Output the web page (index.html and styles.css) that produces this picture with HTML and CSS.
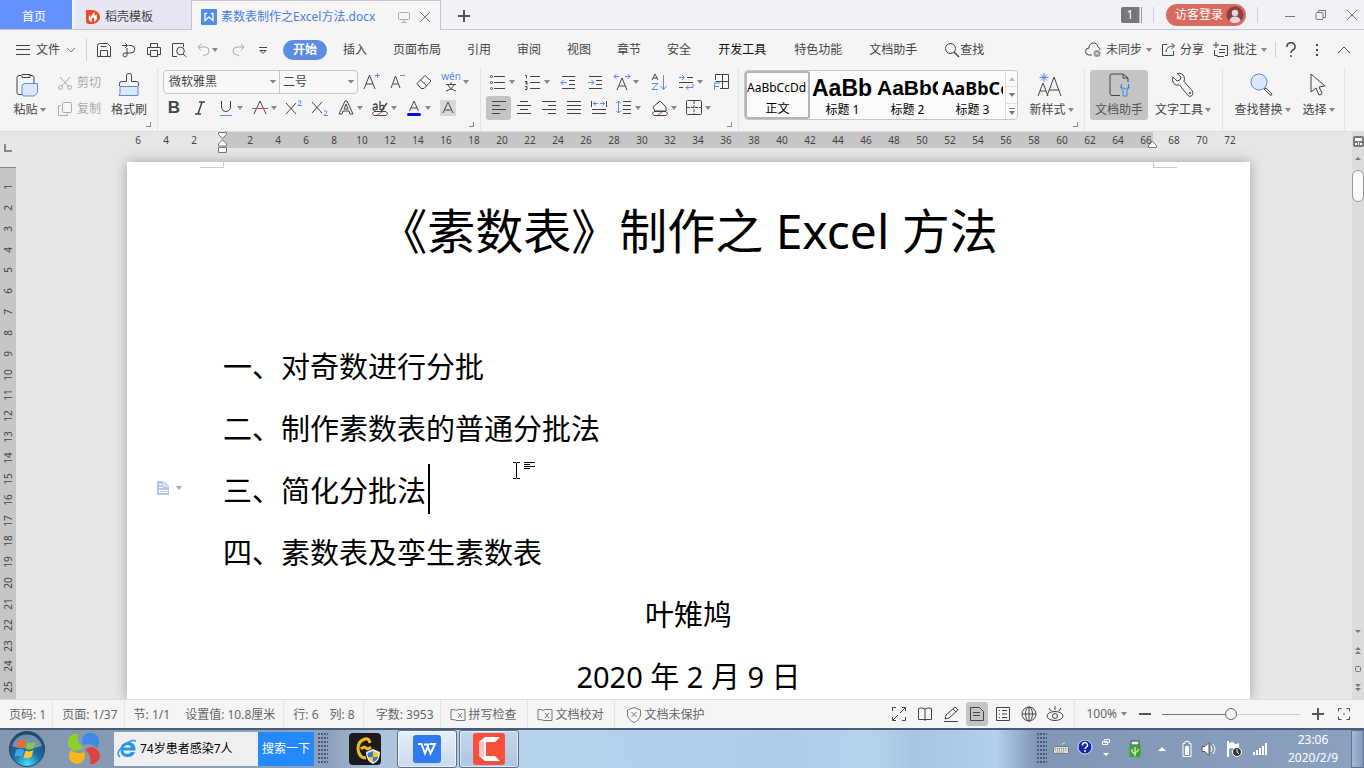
FILE: index.html
```html
<!DOCTYPE html>
<html lang="zh-CN">
<head>
<meta charset="utf-8">
<title>素数表制作之Excel方法.docx</title>
<link rel="stylesheet" href="styles.css">
</head>
<body>
<header class="titlebar">
  <button class="tab tab-home">首页</button>
  <button class="tab tab-docer">
    <svg width="14" height="16" viewBox="0 0 14 16"><path d="M0 1h5a8 7 0 0 1 9 7a8 7 0 0 1-9 7H3a3 3 0 0 1-3-3z" fill="#f04a23"/><path d="M6 13C2 12 2 8 4 6c0 2 1 3 1 3C5 6 7 4 9 3c-1 2 0 3 0 4c1-1 1-2 1-2c2 3 1 7-2 8c1-2 0-4-1-5c-1 2-2 3-1 5z" fill="#fff"/></svg>
    <span>稻壳模板</span>
  </button>
  <div class="tab tab-doc">
    <svg width="16" height="16" viewBox="0 0 16 16"><rect width="16" height="16" rx="1" fill="#4e8ee6"/><path d="M4 4v7.500l4-3.500l4 3.500V4M4 4.500h2M10 4.500h2" fill="none" stroke="#fff" stroke-width="1.300"/></svg>
    <span class="tab-name">素数表制作之Excel方法.docx</span>
    <svg width="12" height="12" viewBox="0 0 12 12" class="ln faint"><rect x=".5" y="1.500" width="11" height="7" rx="1"/><path d="M6 8.500v3M3.500 11.500h5"/></svg>
    <button class="plain" aria-label="关闭标签"><svg width="12" height="12" viewBox="0 0 12 12" class="ln grey"><path d="M1 1l10 10M11 1L1 11"/></svg></button>
  </div>
  <button class="plain new-tab" aria-label="新建"><svg width="12" height="12" viewBox="0 0 12 12" class="ln thick"><path d="M6 0v12M0 6h12"/></svg></button>
  <div class="spacer"></div>
  <div class="window-count"><span>1</span></div>
  <i class="vsep"></i>
  <button class="login">访客登录
    <svg width="18" height="18" viewBox="0 0 18 18"><circle cx="9" cy="9" r="8.500" fill="#8d3f49"/><circle cx="9" cy="7" r="3.200" fill="#e9d6da"/><path d="M3.500 15a5.500 4.500 0 0 1 11 0a8 8 0 0 1-11 0z" fill="#e9d6da"/></svg>
  </button>
  <i class="vsep"></i>
  <div class="window-buttons">
    <button class="plain" aria-label="最小化"><svg width="12" height="12" viewBox="0 0 12 12" class="ln grey"><path d="M1 7.500h10"/></svg></button>
    <button class="plain" aria-label="还原"><svg width="12" height="12" viewBox="0 0 12 12" class="ln grey"><rect x="1" y="3.500" width="7" height="7" rx="1"/><path d="M3.500 3.500V1.500h7v7h-2.500"/></svg></button>
    <button class="plain" aria-label="关闭"><svg width="12" height="12" viewBox="0 0 12 12" class="ln grey"><path d="M1 1l10 10M11 1L1 11"/></svg></button>
  </div>
</header>

<nav class="menubar">
  <button class="file-menu">
    <svg width="14" height="12" viewBox="0 0 14 12" class="ln"><path d="M0 1.500h14M0 5.500h14M0 10.500h14"/></svg>
    <span>文件</span>
    <svg width="10" height="8" viewBox="0 0 10 8" class="ln grey"><path d="M1 2l4 4l4-4"/></svg>
  </button>
  <i class="vsep tall"></i>
  <div class="quick">
    <button class="q" aria-label="保存"><svg width="16" height="16" viewBox="0 0 16 16" class="ln"><path d="M1.500 14.500v-11a2 2 0 0 1 2-2h8l3 3v10zM4.500 14.500v-6h7v6M4.500 4.500h6"/></svg></button>
    <button class="q" aria-label="输出为PDF"><svg width="16" height="16" viewBox="0 0 16 16" class="ln"><path d="M1 3.500h5M4 1l2.500 2.500L4 6M7.500 3.500H10a3.500 3.500 0 0 1 0 7.500H4a2 2 0 1 0 2 2V6"/></svg></button>
    <button class="q" aria-label="打印"><svg width="16" height="16" viewBox="0 0 16 16" class="ln"><path d="M4.500 5V1.500h7V5M4 12.500H1.500v-7h13v7H12M4.500 8.500h7v6h-7z"/></svg></button>
    <button class="q" aria-label="打印预览"><svg width="16" height="16" viewBox="0 0 16 16" class="ln"><path d="M6 14.500H1.500v-13h11V5M12 12l3.500 3"/><circle cx="9.500" cy="9" r="3.800"/></svg></button>
    <button class="q dd" aria-label="撤销"><svg width="16" height="16" viewBox="0 0 16 16" class="ln faint"><path d="M5 2L2 5l3 3.500M2 5h7a4 4 0 0 1 0 8l-2 1"/></svg></button>
    <button class="q" aria-label="恢复"><svg width="16" height="16" viewBox="0 0 16 16" class="ln faint"><path d="M11 2l3 3l-3 3.500M14 5H7a4 4 0 0 0 0 8l2 1"/></svg></button>
    <button class="q" aria-label="自定义快速访问"><svg width="16" height="16" viewBox="0 0 16 16" class="ln"><path d="M4 5.500h8M5 8.500l3 3l3-3z"/></svg></button>
  </div>
  <button class="menu active">开始</button>
  <div class="menus">
    <button class="menu">插入</button><button class="menu">页面布局</button><button class="menu">引用</button><button class="menu">审阅</button><button class="menu">视图</button><button class="menu">章节</button><button class="menu">安全</button><button class="menu wide dark">开发工具</button><button class="menu wide">特色功能</button><button class="menu">文档助手</button>
    <button class="menu find"><svg width="16" height="16" viewBox="0 0 16 16" class="ln"><circle cx="6.500" cy="6.500" r="5"/><path d="M10 10l5 5" stroke-width="1.500"/></svg>查找</button>
  </div>
  <div class="spacer"></div>
  <div class="share-bar">
    <button class="dd"><svg width="17" height="16" viewBox="0 0 17 16" class="ln"><path d="M7 13H4a3.500 3.500 0 0 1 0-7a4.500 4.500 0 0 1 9-1a3 3 0 0 1 2 3"/><circle cx="12" cy="11.500" r="3.500" fill="#999" stroke="none"/><path d="M11 10.500l2 2M13 10.500l-2 2" stroke="#fff"/></svg><span>未同步</span></button>
    <button><svg width="15" height="16" viewBox="0 0 15 16" class="ln"><path d="M6 2.500H1.500v11h11V9M5 10c0-4 3-6 8-6M10.500 1l3 3l-3 3"/></svg><span>分享</span></button>
    <button class="dd"><svg width="16" height="16" viewBox="0 0 16 16" class="ln"><path d="M3 0v6M0 3h6M8 3.500h6.500v10H12M1.500 8v5.500h3M4 14.500h7M6 7.500h6M6 10.500h6"/></svg><span>批注</span></button>
  </div>
  <i class="vsep"></i>
  <div class="help-bar">
    <button class="plain" aria-label="帮助"><svg width="12" height="16" viewBox="0 0 12 16" class="ln strong"><path d="M2 5a4 4 0 1 1 6 3q-2 1-2 3M6 13v2"/></svg></button>
    <button class="plain" aria-label="更多"><svg width="12" height="16" viewBox="0 0 12 16" fill="#444"><rect x="5" y="2" width="2" height="2"/><rect x="5" y="7" width="2" height="2"/><rect x="5" y="12" width="2" height="2"/></svg></button>
    <button class="plain" aria-label="折叠功能区"><svg width="14" height="16" viewBox="0 0 14 16" class="ln"><path d="M1 11l6-6l6 6"/></svg></button>
  </div>
</nav>

<section class="ribbon">
  <div class="group clipboard">
    <button class="big"><svg width="26" height="26" viewBox="0 0 26 26" class="ln"><path d="M8 22.500H4a2 2 0 0 1-2-2V5.500a2 2 0 0 1 2-2h2M15 3.500h2a2 2 0 0 1 2 2V11M7 2.500h8v3H7z"/><path d="M9.500 11.500h13v9l-3 3.500H9a2 2 0 0 1-2-2v-8a2 2 0 0 1 2-2z" fill="#dbe8fb" stroke="#5a8be0"/></svg><span class="dd">粘贴</span></button>
    <div class="stack">
      <button class="small"><svg width="16" height="16" viewBox="0 0 16 16" class="ln faint"><circle cx="3.500" cy="12.500" r="2"/><circle cx="12.500" cy="12.500" r="2"/><path d="M5 11l8-9M11 11L3 2"/></svg>剪切</button>
      <button class="small"><svg width="16" height="16" viewBox="0 0 16 16" class="ln faint"><rect x="5.500" y="1.500" width="9" height="10" rx="1"/><path d="M3.500 4.500h-2v10h9v-2"/></svg>复制</button>
    </div>
    <button class="big"><svg width="26" height="26" viewBox="0 0 26 26" class="ln"><path d="M3.500 14V11.500a2 2 0 0 1 2-2h5v-6q0-2 2.500-2t2.500 2v6h5a2 2 0 0 1 2 2V14"/><path d="M4 14.500h18v9H3l1-2z" fill="#dbe8fb" stroke="#5a8be0"/></svg><span>格式刷</span></button>
    <i class="corner"></i>
  </div>

  <div class="group font">
    <div class="row">
      <div class="combos">
        <select class="font-name" aria-label="字体"><option>微软雅黑</option></select>
        <select class="font-size" aria-label="字号"><option>二号</option></select>
      </div>
      <button class="ib" aria-label="增大字号"><svg width="18" height="18" viewBox="0 0 18 18" class="ln"><path d="M1 16L6.500 2L12 16M3 11h7"/><path d="M14.500 0v5M12 2.500h5" stroke="#5a8be0"/></svg></button>
      <button class="ib" aria-label="减小字号"><svg width="18" height="18" viewBox="0 0 18 18" class="ln"><path d="M2 15L6.500 3L11 15M4 11h5.500"/><path d="M11 2.500h5" stroke="#5a8be0"/></svg></button>
      <button class="ib" aria-label="清除格式"><svg width="18" height="18" viewBox="0 0 18 18" class="ln"><path d="M2 10.500L10 2.500l6 5.500l-7 7.500H6zM5.500 7l6.500 6"/></svg></button>
      <button class="ib dd pinyin" aria-label="拼音指南"><span class="py"><span class="rt">wén</span><svg width="12" height="10" viewBox="0 0 12 10" class="ln"><path d="M6 0v2M1 2.500h10M3 3q2 5 8 6M9 3Q7 8 1 9"/></svg></span></button>
    </div>
    <div class="row second">
      <button class="ib glyph bold">B</button>
      <button class="ib" aria-label="倾斜"><svg width="18" height="18" viewBox="0 0 18 18" class="ln strong"><path d="M8 3h6M4 15h6M11 3L7 15"/></svg></button>
      <button class="ib dd" aria-label="下划线"><svg width="18" height="18" viewBox="0 0 18 18" class="ln"><path d="M4.500 2v6a4.500 4.500 0 0 0 9 0V2"/><path d="M3 16.500h12" stroke="#5a8be0"/></svg></button>
      <button class="ib dd" aria-label="删除线"><svg width="18" height="18" viewBox="0 0 18 18" class="ln"><path d="M3 15L9 2l6 13"/><path d="M1 9.500h16" stroke="#d0504a"/></svg></button>
      <button class="ib" aria-label="上标"><svg width="18" height="18" viewBox="0 0 18 18" class="ln"><path d="M1 4l10 11M11 4L1 15"/><path d="M13 2.500q1.500-1.500 3 0q0 1.500-3 4h4" stroke="#5a8be0"/></svg></button>
      <button class="ib" aria-label="下标"><svg width="18" height="18" viewBox="0 0 18 18" class="ln"><path d="M1 3l10 11M11 3L1 14"/><path d="M13 12.500q1.500-1.500 3 0q0 1.500-3 4h4" stroke="#5a8be0"/></svg></button>
      <button class="ib dd" aria-label="文字效果"><svg width="18" height="18" viewBox="0 0 18 18" class="ln"><path d="M2 15L8 2h2l6 13h-3l-1-3H6l-1 3zM7 10l2-5l2 5z"/></svg></button>
      <button class="ib dd" aria-label="突出显示"><svg width="18" height="18" viewBox="0 0 18 18" class="ln"><path d="M2 6q3-2 4 0v5M6 8q-4 0-4 2q1 2 4 0M9 2v9M9 7q4-2 4 1.500t-4 2M16 4l-6 8" stroke-width="1.300"/><path d="M3 12.500h12q3 2 0 4H3q-3-2 0-4z"/><path d="M6 16l5-3" stroke="#d0504a"/></svg></button>
      <button class="ib dd" aria-label="字体颜色"><svg width="18" height="18" viewBox="0 0 18 18" class="ln"><path d="M4.500 12L9 2l4.500 10M6 9h6"/><path d="M3.500 15.500h11" stroke="#0a0ad6" stroke-width="3" stroke-linecap="round"/></svg></button>
      <button class="ib" aria-label="字符底纹"><svg width="18" height="18" viewBox="0 0 18 18" class="ln"><path d="M1 1h16v16H1z" fill="#d9d9d9" stroke="none"/><path d="M4 14L9 3l5 11M6 11h6"/></svg></button>
    </div>
    <i class="corner"></i>
  </div>

  <div class="group para">
    <div class="row spaced">
      <button class="ib dd" aria-label="项目符号"><svg width="18" height="18" viewBox="0 0 18 18" class="ln"><path d="M5 3.500h11M5 9.500h11M5 15.500h11"/><circle cx="2.500" cy="3.500" r="1"/><circle cx="2.500" cy="9.500" r="1"/><circle cx="2.500" cy="15.500" r="1"/></svg></button>
      <button class="ib dd" aria-label="编号"><svg width="18" height="18" viewBox="0 0 18 18" class="ln"><path d="M6 3.500h10M6 9.500h10M6 15.500h10M1 2.500h1.500v3M1 8.500h2v1h-1v1.500h2M1 13.500h2v3h-2"/></svg></button>
      <button class="ib" aria-label="减少缩进"><svg width="18" height="18" viewBox="0 0 18 18" class="ln"><path d="M3 3.500h13M10 7.500h6M10 11.500h6M3 15.500h13"/><path d="M2 9.500h6M4.500 7L2 9.500L4.500 12" stroke="#5a8be0"/></svg></button>
      <button class="ib" aria-label="增加缩进"><svg width="18" height="18" viewBox="0 0 18 18" class="ln"><path d="M3 3.500h13M10 7.500h6M10 11.500h6M3 15.500h13"/><path d="M2 9.500h6M5.500 7L8 9.500L5.500 12" stroke="#5a8be0"/></svg></button>
      <button class="ib dd" aria-label="字符缩放"><svg width="18" height="18" viewBox="0 0 18 18" class="ln"><path d="M4 17L9 5l5 12M6 13h6"/><path d="M1 3.500h5M3.500 1L1 3.500L3.500 6M12 3.500h5M14.500 1L17 3.500L14.500 6" stroke="#5a8be0"/></svg></button>
      <button class="ib apart" aria-label="排序"><svg width="18" height="18" viewBox="0 0 18 18" class="ln"><path d="M2 7L5 1l3 6M3 5h4"/><path d="M2 10.500h6L2 16.500h6M13.500 2v14.500M10.500 13l3 3.500l3-3.500" stroke="#5a8be0"/></svg></button>
      <button class="ib dd" aria-label="制表位"><svg width="18" height="18" viewBox="0 0 18 18" class="ln"><path d="M10 4.500h6M2 9.500h14M2 14.500h4"/><path d="M2 4.500h5M5 2l2.500 2.500L5 7M16 11v3.500H9M11.500 12L9 14.500L11.500 17" stroke="#5a8be0"/></svg></button>
      <button class="ib" aria-label="文字排列"><svg width="18" height="18" viewBox="0 0 18 18" class="ln"><path d="M3.500 7V1.500h13v14H8M10.500 1.500v14M3.500 8.500h13"/><path d="M2.500 17v-7H8M2.500 13.500H7" stroke="#5a8be0"/></svg></button>
    </div>
    <div class="row second tight">
      <button class="ib on" aria-label="左对齐"><svg width="18" height="18" viewBox="0 0 18 18" class="ln"><path d="M2 2.500h14M2 6.500h8M2 10.500h14M2 14.500h8"/></svg></button>
      <button class="ib" aria-label="居中"><svg width="18" height="18" viewBox="0 0 18 18" class="ln"><path d="M5 2.500h8M2 6.500h14M5 10.500h8M2 14.500h14"/></svg></button>
      <button class="ib" aria-label="右对齐"><svg width="18" height="18" viewBox="0 0 18 18" class="ln"><path d="M2 2.500h14M8 6.500h8M2 10.500h14M8 14.500h8"/></svg></button>
      <button class="ib" aria-label="两端对齐"><svg width="18" height="18" viewBox="0 0 18 18" class="ln"><path d="M2 2.500h14M2 6.500h14M2 10.500h14M2 14.500h14"/></svg></button>
      <button class="ib" aria-label="分散对齐"><svg width="18" height="18" viewBox="0 0 18 18" class="ln"><path d="M1.500 2v6M16.500 2v6M2 10.500h14M2 14.500h14"/><path d="M3 4.500h5M5.500 2.500l-2 2l2 2M10 4.500h5M12.500 2.500l2 2l-2 2" stroke="#5a8be0"/></svg></button>
      <button class="ib dd" aria-label="行距"><svg width="18" height="18" viewBox="0 0 18 18" class="ln"><path d="M8 2.500h8M8 6.500h8M8 10.500h8M8 14.500h8"/><path d="M3.500 2v12M1 4.500L3.500 2L6 4.500M1 11.500L3.500 14L6 11.500" stroke="#5a8be0"/></svg></button>
      <button class="ib dd apart" aria-label="底纹颜色"><svg width="18" height="18" viewBox="0 0 18 18" class="ln"><path d="M2 8l7-6l6 6v4H4zM6 4.500L9 2M3 12.500h12q3 2 0 4H3q-3-2 0-4z"/><path d="M7 16l4-3" stroke="#d0504a"/></svg></button>
      <button class="ib dd" aria-label="边框"><svg width="18" height="18" viewBox="0 0 18 18" class="ln"><rect x="1.500" y="1.500" width="15" height="14" rx="1"/><path d="M9 2v13M2 8.500h14" stroke-dasharray="3 1"/></svg></button>
    </div>
    <i class="corner"></i>
  </div>

  <div class="group styles">
    <div class="gallery">
      <button class="style sel"><span class="pv pv0">AaBbCcDd</span><span>正文</span></button>
      <button class="style"><span class="pv pv1">AaBb</span><span>标题 1</span></button>
      <button class="style"><span class="pv pv2">AaBbC</span><span>标题 2</span></button>
      <button class="style"><span class="pv pv3">AaBbCc</span><span>标题 3</span></button>
      <div class="gallery-nav">
        <button aria-label="上一行"><svg width="6" height="4" viewBox="0 0 6 4"><path d="M0 4l3-4l3 4z" fill="#bbb"/></svg></button>
        <button aria-label="下一行"><svg width="6" height="4" viewBox="0 0 6 4"><path d="M0 0l3 4l3-4z" fill="#777"/></svg></button>
        <button aria-label="展开样式"><svg width="6" height="7" viewBox="0 0 6 7"><path d="M0 0h6v1H0zM0 3l3 4l3-4z" fill="#777"/></svg></button>
      </div>
    </div>
    <button class="big"><svg width="26" height="26" viewBox="0 0 26 26" class="ln"><path d="M1 24L6 11l5 13M3 19h6M10 24L17 5l7 19M12 18h10"/><path d="M7 1v9M2.500 5.500h9M4 2.500l6 6M10 2.500l-6 6" stroke="#5a8be0"/></svg><span class="dd">新样式</span></button>
    <i class="corner"></i>
  </div>

  <div class="group tools">
    <button class="big on"><svg width="26" height="26" viewBox="0 0 26 26" class="ln"><path d="M14 23.500H6a2 2 0 0 1-2-2V4a2 2 0 0 1 2-2h11l5 4v4M17 2v4h5"/><path d="M15.500 12q-2 4 1.500 6v6h4v-6q3.500-2 1.500-6v4h-2l-1 1l-2-1h-2z" stroke="#4a80e0"/></svg><span>文档助手</span></button>
    <button class="big"><svg width="26" height="26" viewBox="0 0 26 26" class="ln"><path d="M4 5l4 4l3-1l1-3L8 1.500q5-1 7 3q1 3 0 5l8 9q2 3 0 5q-2 2-4 0L10.500 13q-4 1-6-2T4 5z"/><circle cx="21" cy="21" r=".7"/></svg><span class="dd">文字工具</span></button>
  </div>

  <div class="group edit">
    <button class="big"><svg width="26" height="26" viewBox="0 0 26 26" class="ln"><circle cx="11" cy="10" r="8" fill="#dbe8fb" stroke="#5a8be0"/><path d="M16 17l6 6q2 1 2-1l-6-6z"/></svg><span class="dd">查找替换</span></button>
    <button class="big"><svg width="26" height="26" viewBox="0 0 26 26" class="ln"><path d="M7 2v18l5-4l3 7q3 0 3-2l-3-6l6-1z"/></svg><span class="dd">选择</span></button>
  </div>
</section>

<main class="workspace">
  <div class="vruler">
    <div class="tabstop"></div>
    <div class="vscale"><span>1</span><span>2</span><span>3</span><span>4</span><span>5</span><span>6</span><span>7</span><span>8</span><span>9</span><span>10</span><span>11</span><span>12</span><span>13</span><span>14</span><span>15</span><span>16</span><span>17</span><span>18</span><span>19</span><span>20</span><span>21</span><span>22</span><span>23</span><span>24</span><span>25</span></div>
  </div>
  <div class="canvas">
    <div class="sheet">
      <div class="hruler">
        <div class="scale before"><span>6</span><span>4</span><span>2</span></div>
        <div class="scale inside">
          <svg class="indent-left" width="10" height="22" viewBox="0 0 10 22"><path d="M.5.500h8v2L4.500 7l-4-4.500zM4.500 8l4 4v2h-8v-2zM.5 15.500h8v5h-8z" fill="#fff" stroke="#777"/></svg>
          <span>2</span><span>4</span><span>6</span><span>8</span><span>10</span><span>12</span><span>14</span><span>16</span><span>18</span><span>20</span><span>22</span><span>24</span><span>26</span><span>28</span><span>30</span><span>32</span><span>34</span><span>36</span><span>38</span><span>40</span><span>42</span><span>44</span><span>46</span><span>48</span><span>50</span><span>52</span><span>54</span><span>56</span><span>58</span><span>60</span><span>62</span><span>64</span><span>66</span>
          <svg class="indent-right" width="10" height="8" viewBox="0 0 10 8"><path d="M4.500.500l4 4v2h-8v-2z" fill="#fff" stroke="#777"/></svg>
        </div>
        <div class="scale after"><span>68</span><span>70</span><span>72</span></div>
      </div>
      <article class="page">
        <i class="crop crop-left"></i><i class="crop crop-right"></i>
        <h1>《素数表》制作之 Excel 方法</h1>
        <p>一、对奇数进行分批</p>
        <p>二、制作素数表的普通分批法</p>
        <p class="current">
          <button class="para-tool dd" aria-label="段落布局"><svg width="14" height="16" viewBox="0 0 14 16"><path d="M1 1h7l5 5v9H1z" fill="#b4c6ea"/><path d="M8 1v5h5M3 4.500h3M3 7.500h4M3 10.500h2M3.500 10.500h8v2h-8z" fill="none" stroke="#fff"/></svg></button>三、简化分批法<i class="text-caret"></i>
          <svg class="pointer" width="24" height="20" viewBox="0 0 24 20"><path d="M1 1.500h3l.5.500l.5-.5h3M1 17.500h3l.5-.5l.5.500h3M4.500 2v15" fill="none" stroke="#000"/><path d="M12 1.500h11M12 3.500h6M12 5.500h11M12 7.500h6" stroke="#000"/></svg>
        </p>
        <p>四、素数表及孪生素数表</p>
        <p class="center">叶雉鸠</p>
        <p class="center">2020 年 2 月 9 日</p>
      </article>
    </div>
  </div>
  <div class="scrollbar">
    <svg width="11" height="11" viewBox="0 0 11 11"><rect width="11" height="11" rx="2" fill="#777"/><path d="M2 2h7v3H2zM2 7h2v2H2zM7 7h2v2H7zM5 6h1v3H5z" fill="#fff"/></svg>
    <svg width="8" height="5" viewBox="0 0 8 5"><path d="M1 4l3-3l3 3z" fill="#777"/></svg>
    <div class="thumb"></div>
    <div class="spacer"></div>
    <div class="browse">
      <svg width="8" height="6" viewBox="0 0 8 6"><path d="M1 1h6l-3 3z" fill="#777"/></svg>
      <svg width="8" height="8" viewBox="0 0 8 8"><path d="M1 4l3-3l3 3zM1 8l3-3l3 3z" fill="#777"/></svg>
      <svg width="8" height="8" viewBox="0 0 8 8"><rect x="1.500" y="1.500" width="5" height="5" rx="1" fill="none" stroke="#777"/></svg>
      <svg width="8" height="8" viewBox="0 0 8 8"><path d="M1 0h6L4 3zM1 4h6L4 7z" fill="#777"/></svg>
    </div>
  </div>
</main>

<footer class="statusbar">
  <span class="st">页码: 1</span>
  <span class="st">页面: 1/37</span>
  <span class="st pair"><span>节: 1/1</span><span>设置值: 10.8厘米</span></span>
  <span class="st rowcol"><span>行: 6</span><span>列: 8</span></span>
  <span class="st">字数: 3953</span>
  <button class="st"><svg width="16" height="14" viewBox="0 0 16 14" class="ln grey"><path d="M7 2.500Q5 1.500 1 1.500v10q4 0 6 1h8v-11H9q-2 0-2 1M8 5l4 5M12 5l-4 5"/></svg>拼写检查</button>
  <button class="st"><svg width="16" height="14" viewBox="0 0 16 14" class="ln grey"><path d="M7 2.500Q5 1.500 1 1.500v10q4 0 6 1h8v-11H9q-2 0-2 1M8 5l4 5M12 5l-4 5"/></svg>文档校对</button>
  <button class="st last"><svg width="16" height="16" viewBox="0 0 16 16" class="ln grey"><path d="M8 .500l6.500 2.500v5q-1 5-6.500 7.500Q2.500 13 1.500 8V3zM5.500 5l5 5M10.500 5l-5 5"/></svg>文档未保护</button>
  <div class="spacer"></div>
  <div class="views">
    <button aria-label="全屏显示"><svg width="16" height="16" viewBox="0 0 16 16" class="ln"><path d="M1.500 5V1.500H5M11 1.500h3.500V5M1.500 11v3.500H5M14.500 11v3.500H11M9 7l5-5M7 9l-5 5"/></svg></button>
    <button aria-label="阅读版式"><svg width="16" height="16" viewBox="0 0 16 16" class="ln"><path d="M8 3v12M8 3Q5 1 1.500 2.500v11H8M8 3q3-2 6.500-.5v11H8"/></svg></button>
    <button aria-label="写作模式"><svg width="16" height="16" viewBox="0 0 16 16" class="ln"><path d="M2 13l1-4l9-8l3 3l-9 8zM10 3l3 3M1 15.500h14"/></svg></button>
    <button class="on" aria-label="页面视图"><svg width="16" height="16" viewBox="0 0 16 16" class="ln"><path d="M1.500 1.500h9l4 4v9h-13zM4 6.500h7M4 9.500h7"/></svg></button>
    <button aria-label="大纲"><svg width="16" height="16" viewBox="0 0 16 16" class="ln"><path d="M1.500 1.500h13v13h-13zM4 4.500h1M7 4.500h5M4 8h1M7 8h5M4 11.500h1M7 11.500h5"/></svg></button>
    <button aria-label="Web版式"><svg width="16" height="16" viewBox="0 0 16 16" class="ln"><circle cx="8" cy="8" r="7"/><ellipse cx="8" cy="8" rx="3.500" ry="7"/><path d="M8 1v14M1 8h14"/></svg></button>
    <button aria-label="护眼模式"><svg width="18" height="16" viewBox="0 0 18 16" class="ln"><ellipse cx="9" cy="10" rx="8" ry="4.500"/><circle cx="9" cy="10" r="2.500"/><path d="M9 0v4M3 2l2 3M15 2l-2 3"/></svg></button>
  </div>
  <div class="zoom">
    <button class="dd pct">100%</button>
    <button class="plain" aria-label="缩小"><svg width="12" height="12" viewBox="0 0 12 12" class="ln thick"><path d="M0 6h12"/></svg></button>
    <input type="range" min="0" max="100" value="50" aria-label="显示比例">
    <button class="plain" aria-label="放大"><svg width="12" height="12" viewBox="0 0 12 12" class="ln thick"><path d="M6 0v12M0 6h12"/></svg></button>
    <button class="plain" aria-label="适应窗口"><svg width="12" height="12" viewBox="0 0 12 12" class="ln"><path d="M.5 3.500v-3h3M8.500.500h3v3M.5 8.500v3h3M11.500 8.500v3h-3M5 6h2"/></svg></button>
  </div>
</footer>

<div class="taskbar">
  <button class="plain orb" aria-label="开始菜单"><svg width="38" height="38" viewBox="0 0 38 38"><defs><radialGradient id="orb" cx=".5" cy=".95" r=".9"><stop offset="0" stop-color="#4ee0ff"/><stop offset=".45" stop-color="#1c6ea6"/><stop offset="1" stop-color="#24486e"/></radialGradient></defs><circle cx="19" cy="19" r="17.500" fill="url(#orb)" stroke="#27405e"/><path d="M4 16a15.500 15.500 0 0 1 30 0q-15 5-30 0z" fill="#a5bdd2" opacity=".6"/><path d="M10 11q4-2 8 0l-1.500 7q-4-2-8 0z" fill="#ee6a2e"/><path d="M19.500 12q4 2 8-.5l-2 7q-4 2-7.500.5z" fill="#8cc63f"/><path d="M8 20q4-2 8 0l-2 7q-3-2-7.500 0z" fill="#43a4e6"/><path d="M17.500 20.500q4 2 8-.5l-2 7q-4 2-8 .5z" fill="#fdc82f"/></svg></button>
  <button class="plain clover" aria-label="浏览器"><svg width="32" height="32" viewBox="0 0 32 32"><path d="M10 1a8.500 8.500 0 1 0 5 13q-7-4-5-13z" fill="#8ed02b"/><path d="M31 9A8.500 8.500 0 1 0 15 12q8-3 14 3q2-2 2-6z" fill="#3f8ae6"/><path d="M22 31a8.500 8.500 0 1 0-5-14q7 5 5 14z" fill="#e0443e"/><path d="M1 23a8 8 0 1 0 15-4Q8 22 3 17q-2 2-2 6z" fill="#f5b81c"/></svg></button>
  <form class="search">
    <svg width="20" height="20" viewBox="0 0 20 20"><path d="M6 11.500h12.500q.5-8.500-8-8.500q-7 1-7 8t7 7q6 0 7.500-5h-4q-1.500 2-4 2t-4-3.500zM6.500 8.500q1-2.500 4-2.500t3.500 2.500z" fill="#2597e8" fill-rule="evenodd"/><path d="M3 18Q-2 14 6 7Q14 0 19 2" fill="none" stroke="#2597e8" stroke-width="1.500"/></svg>
    <input type="text" value="74岁患者感染7人" aria-label="搜索">
    <button type="button">搜索一下</button>
  </form>
  <i class="grip"></i>
  <button class="plain recorder" aria-label="录屏工具"><svg width="32" height="32" viewBox="0 0 32 32"><rect width="32" height="32" rx="4" fill="#1c1a1c"/><path d="M21 10q-1-5-5-4q-7 2-7 10q1 9 8 9M12 16q3-3 5-1t5-1" fill="none" stroke="#f6b81a" stroke-width="3"/><path d="M24 16l7 3q0 9-7 12q-7-3-7-12z" fill="#e9edf0"/><path d="M24 18v6h-5q-1-2 0-4zM24 24h5q-1 4-5 5z" fill="#2d7ec4"/><path d="M24 18l5 2v4h-5zM24 24v5q-4-2-5-5z" fill="#fbc62d"/></svg></button>
  <button class="task active" aria-label="WPS"><svg width="28" height="28" viewBox="0 0 28 28"><rect width="28" height="28" rx="3" fill="#3079ee"/><path d="M5 9h3.500l3.500 9.500L15.500 9.500H11M14.500 11l3 7.500L22 9h-5" fill="none" stroke="#fff" stroke-width="2"/></svg></button>
  <button class="task" aria-label="Camtasia"><svg width="32" height="32" viewBox="0 0 32 32"><rect width="32" height="32" rx="3" fill="#f9503c"/><path d="M27 4H12L6 9v14l6 5h15l-5-5h-9V9h9z" fill="#fff"/><path d="M6 9l5-1v17l-5-2z" fill="#f9c5bf"/></svg></button>
  <div class="spacer"></div>
  <i class="grip"></i>
  <div class="tray">
    <svg width="16" height="16" viewBox="0 0 16 16"><path d="M9 4q0-2 3-2" fill="none" stroke="#ddd"/><rect x=".5" y="5.500" width="15" height="7" rx="1" fill="#dcdcd8" stroke="#777"/><path d="M2 7.500h12M2 9h12M4 11h8" stroke="#888" stroke-dasharray="1 1"/></svg>
    <svg width="16" height="18" viewBox="0 0 16 18"><circle cx="8" cy="7" r="7" fill="#1225a8" stroke="#dbe4ef"/><path d="M5.500 5.500a2.500 2.500 0 1 1 4 1.500q-1.500 1-1.500 2M8 10v2" fill="none" stroke="#fff" stroke-width="1.500"/></svg>
    <svg width="10" height="22" viewBox="0 0 10 22"><path d="M3.500 1.500h5v3h-5zM1.500 3.500h5v3h-5z" fill="none" stroke="#fff"/><path d="M2 15h6l-3 3z" fill="#fff"/></svg>
    <svg class="usb" width="12" height="18" viewBox="0 0 12 18"><path d="M2 1h8v4H2z" fill="#eee" stroke="#444"/><rect x=".5" y="5" width="11" height="12" rx="1" fill="#3ca52c"/><path d="M6 7v9M3 9v3l3 2M9 9v2l-3 2" fill="none" stroke="#fff"/></svg>
    <svg width="10" height="16" viewBox="0 0 10 16"><path d="M1 10l4-4l4 4z" fill="#fff"/></svg>
    <svg class="battery" width="12" height="18" viewBox="0 0 12 18"><path d="M4 1.500h4v2h2v13H2v-13h2z" fill="#8196b2" stroke="#fff"/><path d="M4 6h4v9H4z" fill="#fff"/></svg>
    <svg width="16" height="16" viewBox="0 0 16 16"><path d="M1 5.500h3l4-4v13l-4-4H1z" fill="#fff" stroke="#555"/><path d="M10 5q2 3 0 6M12 3q4 5 0 10" fill="none" stroke="#fff"/></svg>
    <svg width="18" height="18" viewBox="0 0 18 18"><path d="M3 1v16" stroke="#fff" stroke-width="2"/><path d="M4 3q4-2 5 0t5 0v7q-3 1-5-1t-5 0z" fill="#fff"/><circle cx="12" cy="12" r="4.500" fill="#333" stroke="#fff"/><path d="M12 9v3l2 2" fill="none" stroke="#fff"/></svg>
    <svg width="18" height="16" viewBox="0 0 18 16"><path d="M2 11h2v3H2zM5 9h2v5H5zM8 7h2v7H8zM11 5h2v9h-2zM14 2h2v12h-2z" fill="#fff"/></svg>
  </div>
  <div class="clock"><span>23:06</span><span>2020/2/9</span></div>
  <button class="show-desktop" aria-label="显示桌面"></button>
</div>
</body>
</html>
```

FILE: styles.css
```css
* { box-sizing: border-box; }

body {
  margin: 0;
  height: 100vh;
  display: flex;
  flex-direction: column;
  overflow: hidden;
  background: #f5f5f5;
  color: #444;
  font: 12px/16px "Noto Sans", "Noto Sans CJK SC", sans-serif;
}

button, select, input {
  font: inherit;
  color: inherit;
  margin: 0;
  padding: 0;
  border: 0;
  background: none;
  white-space: nowrap;
}

svg { display: block; flex: none; }
i { display: block; flex: none; }
.spacer { flex: 1; }

.ln { fill: none; stroke: #444; }
.ln.grey { stroke: #777; }
.ln.faint { stroke: #aaa; }
.ln.thick { stroke: #555; stroke-width: 2; }
.ln.strong { stroke-width: 1.5; }

.plain { display: flex; align-items: center; justify-content: center; }

/* drop-down marker */
.dd::after {
  content: "";
  flex: none;
  border: 3px solid transparent;
  border-top: 4px solid #888;
  border-bottom: 0;
}

.vsep { width: 1px; height: 16px; background: #cfd0d6; }

/* title bar */
.titlebar {
  flex: none;
  display: flex;
  align-items: center;
  height: 30px;
  background: #f1f2f6;
  border-bottom: 1px solid #c3c4d2;
}
.tab { display: flex; align-items: center; height: 29px; padding-top: 4px; }
.tab-home { width: 72px; padding-right: 4px; justify-content: center; background: #6490fd; color: #fff; }
.tab-docer { width: 116px; margin-left: 3px; padding-left: 11px; gap: 5px; background: #e6e7f2; }
.tab-doc {
  width: 250px;
  height: 30px;
  margin-bottom: -1px;
  padding: 2px 9px 0;
  gap: 4px;
  border: 1px solid #c3c4d2;
  border-bottom: 0;
  background: #f5f5f5;
  color: #4a7de0;
}
.tab-name { flex: 1; }
.tab-doc button { width: 12px; margin-left: 5px; }
.new-tab { width: 45px; height: 29px; padding-top: 2px; }
.window-count {
  display: flex;
  width: 21px;
  height: 16px;
  margin-right: 11px;
  border-right: 1px solid #999;
  padding-right: 1px;
}
.window-count span {
  flex: 1;
  border-right: 1px solid #bbb;
  border-radius: 2px 0 0 2px;
  background: #777;
  color: #fff;
  text-align: center;
}
.login {
  display: flex;
  align-items: center;
  gap: 3px;
  height: 22px;
  margin: 0 11px 0 12px;
  padding: 0 2px 0 9px;
  border-radius: 11px;
  background: #d96a60;
  color: #fff;
}
.window-buttons { display: flex; gap: 19px; padding: 0 6px 0 26px; }

/* menu bar */
.menubar { flex: none; display: flex; align-items: center; height: 38px; padding-top: 1px; }
.file-menu { display: flex; align-items: center; gap: 6px; padding: 0 10px 0 16px; }
.vsep.tall { height: 22px; }
.quick { display: flex; padding-left: 4px; }
.q { display: flex; align-items: center; justify-content: center; width: 25px; height: 24px; }
.q.dd { width: 34px; justify-content: flex-start; padding-left: 5px; }
.menu.active {
  width: 44px;
  height: 20px;
  margin-left: 8px;
  border-radius: 10px;
  background: #5b8ee0;
  color: #fff;
  font-weight: bold;
}
.menus { display: flex; margin-left: 3px; }
.menu { height: 24px; padding: 0 13px; }
.menu.active { padding: 0; }
.menu.wide { padding: 0 14px; }
.menu.dark { color: #111; }
.menu.find { display: flex; align-items: center; padding-left: 14px; }
.share-bar { display: flex; gap: 9px; }
.share-bar button { display: flex; align-items: center; gap: 4px; }
.menubar > .vsep:not(.tall) { margin-left: 8px; }
.help-bar { display: flex; gap: 14px; padding: 0 13px 0 9px; }

/* ribbon */
.ribbon {
  flex: none;
  display: flex;
  height: 64px;
  border-bottom: 1px solid #dcdcdc;
}
.group {
  position: relative;
  flex: none;
  border-right: 1px solid #e4e4e4;
}
.corner {
  position: absolute;
  right: 6px;
  bottom: 4px;
  width: 5px;
  height: 5px;
  border: solid #888;
  border-width: 0 1px 1px 0;
}
.row { display: flex; align-items: center; height: 28px; }
.row.second { height: 24px; }
.row.spaced { gap: 1px; }
.row.tight .ib { width: 25px; }
.row .ib.apart { margin-left: 2px; }
.ib {
  display: flex;
  align-items: center;
  justify-content: center;
  width: 26px;
  height: 24px;
  border-radius: 3px;
}
.ib.dd, .row.tight .ib.dd { width: 34px; justify-content: flex-start; padding-left: 4px; gap: 2px; }
.on { background: #c4c4c4; border-radius: 3px; }
.glyph.bold { font: bold 17px/24px "Liberation Sans", sans-serif; }
.big {
  display: flex;
  flex-direction: column;
  align-items: center;
  gap: 4px;
  height: 50px;
  padding: 2px 0;
}
.big span { display: flex; align-items: center; gap: 2px; }
.big span.dd { margin-right: -3px; }
.big.on span { color: #555; }
.clipboard, .styles, .tools, .edit { display: flex; padding-top: 2px; }
.clipboard { width: 158px; padding-left: 11px; }
.clipboard .big:first-child { width: 34px; }
.clipboard .big:last-of-type { width: 50px; }
.stack { padding-left: 12px; width: 59px; }
.small { display: flex; align-items: center; gap: 4px; height: 26px; color: #aaa; }
.font { width: 323px; padding-left: 3px; }
.font .row:first-child { padding-left: 2px; }
.combos {
  display: flex;
  width: 195px;
  height: 24px;
  margin-right: 1px;
  border: 1px solid #c6c6c6;
  border-radius: 4px;
  background: #f8f8f8;
}
.combos select {
  appearance: none;
  padding-left: 5px;
  background: no-repeat right 3px center / 6px 4px conic-gradient(from -37deg at 50% 100%, #888 74deg, transparent 0);
}
.font-name { width: 115px; }
.combos .font-size { flex: 1; padding-left: 3px; border-left: 1px solid #c6c6c6; }
.py { display: flex; flex-direction: column; align-items: center; gap: 1px; width: 20px; }
.py .rt { font-size: 10px; line-height: 9px; color: #5a8be0; }
.para { width: 258px; padding-left: 4px; }
.para .second { padding-left: 1px; }
.styles { width: 346px; padding-left: 5px; }
.gallery {
  display: flex;
  width: 274px;
  height: 50px;
  border: 1px solid #c6c6c6;
  border-radius: 4px;
  background: #fbfbfb;
}
.style {
  display: flex;
  flex-direction: column;
  align-items: center;
  width: 65px;
  overflow: hidden;
  color: #000;
}
.style.sel { border: 2px solid #b4b4b4; border-radius: 3px; }
.style.sel .pv { height: 29px; }
.style.sel .pv0 { line-height: 30px; }
.pv { width: 61px; height: 31px; overflow: hidden; text-align: left; font-weight: bold; line-height: 34px; }
.pv0 { font-weight: normal; }
.pv1 { font-family: "Liberation Sans", sans-serif; font-size: 23px; }
.pv2 { font-family: "Liberation Sans", sans-serif; font-size: 21px; }
.pv3 { font-size: 18px; }
.gallery-nav { flex: 1; display: flex; flex-direction: column; border-left: 1px solid #ddd; }
.gallery-nav button { flex: 1; display: flex; align-items: center; justify-content: center; }
.gallery-nav button + button { border-top: 1px solid #ddd; }
.styles .big { width: 56px; margin-left: 4px; }
.tools { width: 138px; padding-left: 5px; }
.tools .big { width: 58px; }
.tools .big + .big { width: 67px; }
.edit { width: 122px; padding-left: 5px; }
.edit .big { width: 66px; }
.edit .big + .big { width: 46px; }

/* work area */
.workspace { flex: 1; min-height: 0; display: flex; background: #e7e7e7; }
.vruler { flex: none; width: 16px; display: flex; flex-direction: column; }
.tabstop { position: relative; height: 36px; border-bottom: 1px solid #888; flex: none; }
.tabstop::before {
  content: "";
  position: absolute;
  left: 4px;
  top: 12px;
  width: 6px;
  height: 6px;
  border: solid #888;
  border-width: 0 0 2px 2px;
}
.vscale { flex: 1; display: flex; flex-direction: column; padding: 9px 0 1px; background: #c6c6c6; }
.vscale span {
  flex: 1;
  width: 16px;
  writing-mode: vertical-rl;
  transform: rotate(180deg);
  text-align: center;
  font-size: 10px;
  line-height: 16px;
}
.canvas { flex: 1; min-width: 0; display: flex; justify-content: center; padding-left: 9px; }
.sheet { flex: none; width: 1123px; display: flex; flex-direction: column; }
.hruler { flex: none; display: flex; height: 30px; margin-left: -3px; font-size: 10px; }
.scale { flex: none; display: flex; height: 16px; }
.scale span { flex: none; width: 28px; text-align: center; }
.scale.inside { position: relative; width: 931px; margin-left: 14px; padding-left: 14px; background: #c6c6c6; }
.scale.after { margin-left: 7px; }
.indent-left { position: absolute; left: -4px; top: 0; }
.indent-right { position: absolute; right: -5px; top: 9px; }
.page {
  position: relative;
  flex: 1;
  min-height: 0;
  padding: 36px 96px 0;
  background: #fff;
  box-shadow: 0 0 12px rgba(0, 0, 0, .3);
  clip-path: inset(-14px -14px 0);
  color: #000;
  font-size: 29px;
  line-height: 62px;
  white-space: nowrap;
}
.page h1 { margin: 0 0 72px; font-size: 48px; line-height: 66px; font-weight: normal; text-align: center; }
.page p { margin: 0; height: 62px; }
.page .center { text-align: center; }
.crop { position: absolute; top: 0; width: 24px; height: 6px; border-bottom: 1px solid #ccc; }
.crop-left { left: 73px; border-right: 1px solid #ccc; }
.crop-right { right: 73px; border-left: 1px solid #ccc; }
.page .current { position: relative; display: flex; }
.text-caret { width: 2px; height: 50px; margin: 4px 0 0 2px; background: #000; }
.para-tool { position: absolute; left: -67px; top: 20px; display: flex; align-items: center; gap: 6px; }
.para-tool::after { border-top-color: #aaa; }
.pointer { position: absolute; left: 289px; top: 1px; }

.scrollbar {
  flex: none;
  width: 12px;
  display: flex;
  flex-direction: column;
  align-items: center;
  padding-top: 4px;
  gap: 9px;
  background: #dcdcdc;
}
.thumb { width: 12px; height: 32px; border: 1px solid #999; border-radius: 6px; background: #fafafa; }
.browse { display: flex; flex-direction: column; gap: 11px; padding-bottom: 7px; }

/* status bar */
.statusbar {
  flex: none;
  display: flex;
  align-items: center;
  height: 29px;
  border-top: 1px solid #ddd;
  color: #666;
}
.st {
  display: flex;
  align-items: center;
  gap: 3px;
  height: 28px;
  padding: 1px 6px 0 9px;
  border-right: 1px solid #e4e4e4;
}
.st.pair { gap: 15px; }
.st.rowcol { gap: 11px; padding-right: 12px; }
.st.pair, .st + .st.rowcol { padding-right: 8px; }
.st.rowcol + .st { padding-left: 12px; }
button.st { padding-right: 10px; }
button.st.last { border: 0; padding-left: 11px; }
.views { display: flex; height: 28px; align-items: center; padding-right: 8px; border-right: 1px solid #e4e4e4; }
.views button { display: flex; align-items: center; justify-content: center; width: 22px; height: 24px; }
.views button + button { margin-left: 4px; }
.zoom { display: flex; align-items: center; padding: 0 14px 0 11px; }
.pct { display: flex; align-items: center; gap: 4px; margin-right: 12px; }
.zoom input {
  appearance: none;
  width: 138px;
  height: 14px;
  margin: 0 12px 0 11px;
  background: linear-gradient(90deg, #777 50%, #ccc 50%) center / 100% 1px no-repeat;
}
.zoom input::-webkit-slider-thumb {
  appearance: none;
  width: 12px;
  height: 12px;
  border: 1px solid #666;
  border-radius: 6px;
  background: #f5f5f5;
}
.zoom input + .plain { margin-right: 14px; }

/* desktop task bar */
.taskbar {
  flex: none;
  display: flex;
  align-items: center;
  height: 40px;
  border-top: 2px solid #4a5c78;
  background: linear-gradient(90deg, #8497b0 0, #8da0bb 24%, #aec3dc 28%, #b6d2eb 38%, #b2cdec 58%, #b6d2eb 64%, #aac5e2 67%, #b3d0ec 73%, #8096b5 76%, #8ca1bf 100%);
}
.orb { width: 54px; }
.clover { width: 60px; }
.search { display: flex; align-items: center; width: 200px; height: 34px; margin-right: 4px; padding-left: 3px; background: #efefef; }
.search input { flex: 1; min-width: 0; padding-left: 3px; color: #000; }
.search button { width: 56px; height: 34px; background: #2389fc; color: #fff; }
.grip { width: 10px; height: 32px; background: radial-gradient(circle at 1px 1px, #4c5f7b 1px, transparent 1px) 0 0 / 3px 4px; }
.recorder { margin: 0 16px 0 21px; }
.task {
  display: flex;
  align-items: center;
  justify-content: center;
  width: 60px;
  height: 38px;
  margin-right: 2px;
  border: 1px solid #596e8e;
  border-radius: 3px;
  background: linear-gradient(#c6d6e8, #aec6e0);
  box-shadow: inset 0 0 0 1px rgba(255, 255, 255, .6);
}
.task.active { background: linear-gradient(#e8f0f8, #c9daec); }
.spacer + .grip { margin-right: 6px; }
.tray { display: flex; align-items: center; gap: 8px; }
.tray .usb { margin: 0 8px 0 10px; }
.tray .battery { margin-left: 6px; }
.clock { display: flex; flex-direction: column; align-items: center; width: 72px; margin: 0 2px 0 8px; color: #fff; line-height: 18px; }
.show-desktop { width: 13px; height: 38px; border: 1px solid #5e7393; background: linear-gradient(90deg, #a6bad4, #8398b6); }
```
